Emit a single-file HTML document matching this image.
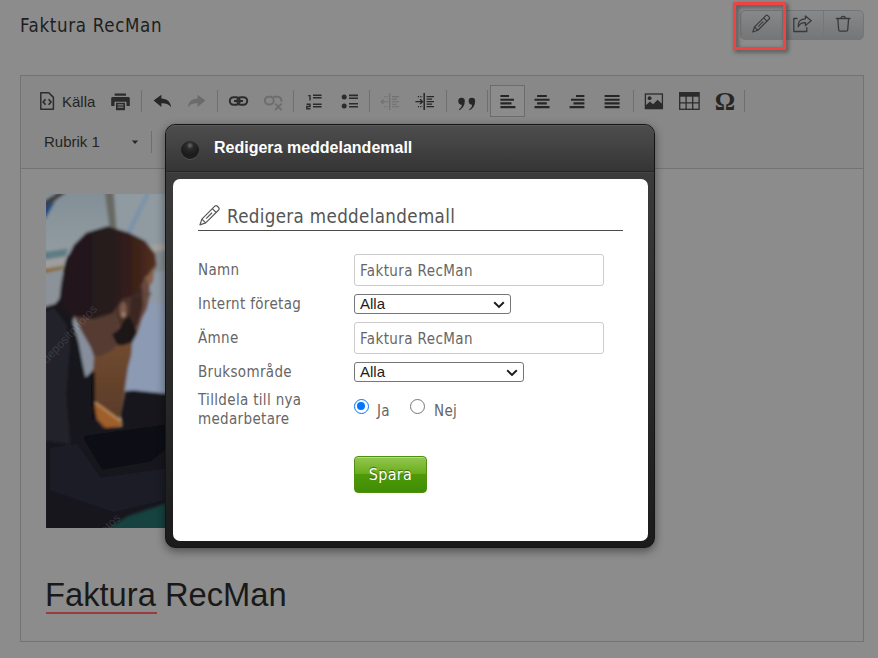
<!DOCTYPE html>
<html lang="sv">
<head>
<meta charset="utf-8">
<title>Redigera meddelandemall</title>
<style>
*{box-sizing:border-box;margin:0;padding:0}
html,body{width:878px;height:658px;overflow:hidden;background:#8c8c8c}
body{position:relative;font-family:"Liberation Sans",sans-serif}
.os{font-family:"DejaVu Sans","Liberation Sans",sans-serif;font-stretch:condensed}
.ar{font-family:"Liberation Sans",sans-serif}
.abs,svg{position:absolute}
#title{position:absolute;left:20px;top:13px;font-size:18.6px;letter-spacing:.66px;color:#1e1e1e;line-height:26px;white-space:nowrap}
#editor{position:absolute;left:20px;top:75px;width:844px;height:567px;border:1px solid #737373;background:#8c8c8c}
#toolbar{position:absolute;left:0;top:0;width:842px;height:93px;background:#888;border-bottom:1px solid #737373}
.sep{position:absolute;width:1px;height:22px;top:90px;background:#6f6f6f}
.tbt{position:absolute;font-size:15px;line-height:20px;color:#242424;white-space:nowrap}
#abtn{position:absolute;left:490px;top:85px;width:35px;height:32px;border:1px solid #6c6c6c;background:#8c8c8c}
#bigh{position:absolute;left:45px;top:575px;font-size:32.7px;line-height:40px;color:#191919;white-space:nowrap}
#redu{position:absolute;left:46px;top:612px;width:111px;height:2px;background:#9a3c3c}
#btns{position:absolute;left:740px;top:10px;width:124px;height:30px;border:1px solid #747576;border-radius:5px;background:linear-gradient(#87888a,#757678)}
#btns i{position:absolute;top:0;width:1px;height:28px;background:#767676}
#redbox{position:absolute;left:733px;top:2px;width:53px;height:48px;border:3px solid #f04343;filter:drop-shadow(2px 2px 2px rgba(0,0,0,.5))}
#modal{position:absolute;left:165px;top:124px;width:490px;height:424px;border-radius:10px;background:linear-gradient(#3b3b3b 50px,#1b1b1b 100%);border:1px solid #151515;box-shadow:0 3px 10px rgba(0,0,0,.45)}
#mhead{position:absolute;left:0;top:0;width:488px;height:47px;border-radius:9px 9px 0 0;background:linear-gradient(#4d4d4d,#353535);border-top:1px solid #5a5a5a;border-bottom:1px solid #262626}
#mline{position:absolute;left:0;top:47px;width:488px;height:1px;background:#454545}
#ball{position:absolute;left:15px;top:15px;width:18px;height:18px;border-radius:50%;background:radial-gradient(circle at 50% 25%,#6a6a6a 0,#2a2a2a 22%,#1b1b1b 60%,#222 100%);box-shadow:0 1px 0 rgba(255,255,255,.12)}
#mtitle{position:absolute;left:48px;top:12px;font-size:16px;font-weight:bold;color:#fff;line-height:20px;white-space:nowrap}
#mbody{position:absolute;left:7px;top:54px;width:475px;height:362px;background:#fff;border-radius:7px}
#h2{position:absolute;left:25px;top:21px;width:425px;height:31px;border-bottom:1px solid #4a4a4a}
#h2 span{position:absolute;left:29px;top:2px;font-size:18.6px;letter-spacing:.35px;line-height:30px;color:#555;white-space:nowrap}
.lbl{position:absolute;left:25px;margin-top:2px;font-size:15px;letter-spacing:.33px;line-height:19px;color:#666;white-space:nowrap}
.inp{position:absolute;left:181px;width:250px;height:32px;border:1px solid #ccc;border-radius:3px;background:#fff}
.inp span{position:absolute;left:5px;top:6px;font-size:15px;letter-spacing:.4px;line-height:20px;color:#666;white-space:nowrap}
.sel{position:absolute;left:181px;height:20px;border:1px solid #767676;border-radius:3px;background:#fff}
.sel span{position:absolute;left:5px;top:0;font-size:15px;line-height:18px;color:#1c1c1c;white-space:nowrap}
.sel svg{right:5px;top:6px}
.radio{position:absolute;top:220px;width:15px;height:15px;border-radius:50%;border:1.500px solid #767676;background:#fff}
.radio.on{border-color:#0075ff}
.radio.on:after{content:"";position:absolute;left:1.750px;top:1.750px;width:8.500px;height:8.500px;border-radius:50%;background:#0075ff}
.rl{position:absolute;top:222px;font-size:15px;letter-spacing:.33px;line-height:20px;color:#666}
#spara{position:absolute;left:181px;top:277px;width:73px;height:37px;border-radius:4px;border:1px solid #4f8f10;background:linear-gradient(#93c750 0,#6aad1c 48%,#4f9a0a 50%,#3f8d05 100%);box-shadow:inset 0 1px 0 rgba(255,255,255,.35)}
#spara span{position:absolute;left:0;width:100%;top:8px;text-align:center;font-size:16px;letter-spacing:.3px;line-height:20px;color:#fff;text-shadow:0 -1px 1px rgba(0,0,0,.45)}
</style>
</head>
<body>
<div id="title" class="os">Faktura RecMan</div>
<div id="btns"><i style="left:41px"></i><i style="left:82px"></i></div>
<div id="redbox"></div>
<div id="editor"><div id="toolbar"></div></div>
<!--TB0-->
<div id="tb">
<svg style="left:39px;top:91px" width="17" height="20" viewBox="0 0 17 20"><path d="M1.8 1.8h8l4.6 4.6v11.8h-12.6z" fill="none" stroke="#2d2d2d" stroke-width="1.5" stroke-linejoin="round"/><path d="M6.6 8.2 4.2 11l2.4 2.8M9.6 8.2 12 11l-2.4 2.8" fill="none" stroke="#2d2d2d" stroke-width="1.7"/></svg>
<div class="tbt ar" style="left:62px;top:92px">Källa</div>
<svg style="left:111px;top:93px" width="19" height="18" viewBox="0 0 19 18"><rect x="3.6" y="0.5" width="11.4" height="2.2" fill="#2b2b2b"/><path d="M1.6 4h15.8a1.4 1.4 0 0 1 1.4 1.4v7.6h-3.3v-4.2h-12v4.2h-3.3v-7.6a1.4 1.4 0 0 1 1.4-1.4z" fill="#2b2b2b"/><rect x="5" y="9.8" width="9" height="7.4" fill="#2b2b2b"/><rect x="6.6" y="11.3" width="5.8" height="1.1" fill="#888"/><rect x="6.6" y="13.6" width="5.8" height="1.1" fill="#888"/></svg>
<i class="sep" style="left:141px"></i>
<svg style="left:153px;top:94px" width="19" height="14" viewBox="0 0 19 14"><path d="M.6 6.6 8.4.8v3.6c5.4.2 9 3 9.8 8.8-2.2-3-5.200-4.200-9.800-4v3.800z" fill="#262626"/></svg>
<svg style="left:187px;top:94px" width="19" height="14" viewBox="0 0 19 14"><path d="M18.400 6.600 10.600.8v3.600c-5.400.2-9 3-9.800 8.800 2.200-3 5.200-4.200 9.800-4v3.800z" fill="#6b6b6b"/></svg>
<i class="sep" style="left:217px"></i>
<svg style="left:228px;top:95px" width="21" height="12" viewBox="0 0 21 12"><rect x="1.800" y="2.200" width="10" height="7.600" rx="3.800" fill="none" stroke="#2b2b2b" stroke-width="2"/><rect x="9.200" y="2.200" width="10" height="7.600" rx="3.800" fill="none" stroke="#2b2b2b" stroke-width="2"/><rect x="6" y="5" width="9" height="2" fill="#2b2b2b"/></svg>
<svg style="left:263px;top:95px" width="21" height="16" viewBox="0 0 21 16"><rect x="1.800" y="1.800" width="9" height="7.600" rx="3.800" fill="none" stroke="#6d6d6d" stroke-width="2"/><path d="M10 1.800h4.600a3.800 3.800 0 0 1 3.600 5" fill="none" stroke="#6d6d6d" stroke-width="2"/><path d="M12.200 8.600 18.600 15M18.600 8.600 12.200 15" stroke="#6d6d6d" stroke-width="1.900"/></svg>
<i class="sep" style="left:293px"></i>
<svg style="left:305px;top:93px" width="18" height="18" viewBox="0 0 18 18"><path d="M8 2.200h8.600M8 4.800h8.600M8 11.200h8.600M8 13.700h8.600" stroke="#2b2b2b" stroke-width="1.500"/><path d="M3.200 2.600h1.800v5M1.600 11.200h3.400v2.300h-3.200v2.300h3.600" fill="none" stroke="#2b2b2b" stroke-width="1.400"/></svg>
<svg style="left:341px;top:93px" width="18" height="18" viewBox="0 0 18 18"><circle cx="3.200" cy="4.100" r="2.500" fill="#2b2b2b"/><circle cx="3.200" cy="12.900" r="2.500" fill="#2b2b2b"/><path d="M8 2.400h9M8 5.300h9M8 10.800h9M8 13.800h9" stroke="#2b2b2b" stroke-width="1.600"/></svg>
<i class="sep" style="left:369px"></i>
<svg style="left:380px;top:92px" width="20" height="19" viewBox="0 0 20 19"><path d="M9.700 1v17" stroke="#707070" stroke-width="1.200"/><path d="M12 4.600h7M12 7.100h5M12 9.700h7M12 12.200h5M12 14.700h7" stroke="#707070" stroke-width="1.100"/><path d="M1.200 9.700h7M3.600 7.500 1.200 9.700 3.600 11.900" fill="none" stroke="#707070" stroke-width="1.100"/><path d="M4 4.600h4.500M4 14.700h4.500" stroke="#707070" stroke-width="1.100" stroke-dasharray="1.100 1.100"/></svg>
<svg style="left:414px;top:92px" width="21" height="19" viewBox="0 0 21 19"><path d="M10.200 1v17" stroke="#262626" stroke-width="1.500"/><path d="M12.600 4.600h7.400M12.600 7.100h5.400M12.600 9.700h7.400M12.600 12.200h5.400M12.600 14.700h7.400" stroke="#262626" stroke-width="1.300"/><path d="M1.400 9.700h7M6 7.300 8.600 9.700 6 12.100" fill="none" stroke="#262626" stroke-width="1.300"/><path d="M3.800 4.600h5M3.800 14.700h5" stroke="#262626" stroke-width="1.300" stroke-dasharray="1.200 1.200"/></svg>
<i class="sep" style="left:446px"></i>
<svg style="left:458px;top:96.500px" width="19.400" height="14" viewBox="0 0 18 13"><path id="qm" d="M3.300.6a3 3 0 0 1 3 3.100c0 3.800-1.700 6.900-5 8.500l-.5-.9c1.900-1.300 2.700-2.600 2.700-4.200a3 3 0 0 1-3.200-3.300 3 3 0 0 1 3-3.200z" fill="#262626"/><path d="M3.300.6a3 3 0 0 1 3 3.100c0 3.800-1.700 6.900-5 8.500l-.5-.9c1.900-1.300 2.700-2.600 2.700-4.200a3 3 0 0 1-3.200-3.300 3 3 0 0 1 3-3.200z" fill="#262626" transform="translate(9.600 0)"/></svg>
<i class="sep" style="left:487px"></i>
<div id="abtn"></div>
<svg style="left:500px;top:94px" width="16" height="16" viewBox="0 0 16 16"><path d="M.4 2h8.600M.4 5.700h13.600M.4 9.400h11.100M.4 13.100h15" stroke="#262626" stroke-width="2.100"/></svg>
<svg style="left:534px;top:94px" width="16" height="16" viewBox="0 0 16 16"><path d="M3.100 2h9.700M.5 5.700h15M3.100 9.400h9.700M.5 13.100h15" stroke="#262626" stroke-width="2.100"/></svg>
<svg style="left:569px;top:94px" width="16" height="16" viewBox="0 0 16 16"><path d="M7 2h8.400M2 5.700h13.400M4.500 9.400h10.900M.6 13.100h14.800" stroke="#262626" stroke-width="2.100"/></svg>
<svg style="left:604px;top:94px" width="16" height="16" viewBox="0 0 16 16"><path d="M.6 2h15M.6 5.700h15M.6 9.400h15M.6 13.100h15" stroke="#262626" stroke-width="2.100"/></svg>
<i class="sep" style="left:633px"></i>
<svg style="left:644px;top:93px" width="20" height="17" viewBox="0 0 20 17"><rect x="1.400" y="1" width="17" height="14.600" fill="none" stroke="#2b2b2b" stroke-width="1.300"/><circle cx="5.600" cy="5.200" r="1.900" fill="#2b2b2b"/><path d="M1.800 15v-2.800l4.200-3.800 3 2.800 4.600-4.400 4.600 4.200v4z" fill="#2b2b2b"/></svg>
<svg style="left:679px;top:92px" width="21" height="18" viewBox="0 0 21 18"><rect x=".7" y=".7" width="19.400" height="16.600" fill="none" stroke="#2b2b2b" stroke-width="1.300"/><rect x=".7" y=".7" width="19.400" height="4" fill="#2b2b2b"/><path d="M.7 10.800h19.400M7.100 4v13.300M13.700 4v13.300" stroke="#2b2b2b" stroke-width="1.300"/></svg>
<div class="abs" style="left:713px;top:86px;width:24px;font:bold 25.5px/32px 'Liberation Serif',serif;color:#262626;text-align:center">Ω</div>
<i class="sep" style="left:744px"></i>
<div class="tbt ar" style="left:44px;top:132px">Rubrik 1</div>
<svg style="left:131px;top:140px" width="8" height="5" viewBox="0 0 8 5"><path d="M.8.600h6.400L4 4z" fill="#262626"/></svg>
<i class="sep" style="left:151px;top:131px"></i>
</div>
<!--TB1-->
<!--TI0-->
<svg style="left:750px;top:13px" width="22" height="22" viewBox="0 0 22 22"><g transform="translate(2.800 19) rotate(-45) scale(.87)" fill="none" stroke="#3a3a3a" stroke-width="1.350" stroke-linejoin="round"><path d="M0 0 5.500-2.700h18.300q1.700 0 1.700 1.500v2.400q0 1.500-1.700 1.500h-18.300z"/><path d="M5.500-2.700v5.400M20.300-2.700v5.400M8.800 0h8.400"/></g></svg>
<svg style="left:791px;top:13px" width="22" height="22" viewBox="0 0 22 22"><g fill="none" stroke="#3a3a3a" stroke-width="1.300" stroke-linejoin="round" stroke-linecap="round"><path d="M6 5.500h-3.200v13h13v-3.800"/><path d="M14.400 3l5.800 4.800-5.800 4.800v-3c-3.600-.2-6 1.200-7.200 4.200-.6-5 2.400-8 7.200-8z"/></g></svg>
<svg style="left:832px;top:13px" width="22" height="22" viewBox="0 0 22 22"><g fill="none" stroke="#3a3a3a" stroke-width="1.300" stroke-linejoin="round" stroke-linecap="round"><path d="M4.400 5.500h13.600M9 5.300q0-2 2.200-2t2.200 2"/><path d="M5.800 5.700 6.700 17q.1 1.200 1.300 1.200h6.400q1.200 0 1.300-1.200l.9-11.300"/></g></svg>
<!--TI1-->
<!--PH0-->
<svg id="photo" style="left:46px;top:194px" width="180" height="334" viewBox="0 0 180 334">
<defs>
<filter id="b1" x="-10%" y="-10%" width="120%" height="120%"><feGaussianBlur stdDeviation="1.400"/></filter>
<filter id="b2" x="-30%" y="-30%" width="160%" height="160%"><feGaussianBlur stdDeviation="4"/></filter>
<clipPath id="pc"><rect x="0" y="0" width="180" height="334"/></clipPath>
<linearGradient id="hairg" x1="0" y1="0" x2="1" y2="0"><stop offset="0" stop-color="#1f181b"/><stop offset=".55" stop-color="#271a1a"/><stop offset=".8" stop-color="#3c2119"/><stop offset="1" stop-color="#54301c"/></linearGradient>
<linearGradient id="wing" x1="0" y1="0" x2="0" y2="1"><stop offset="0" stop-color="#828f97"/><stop offset="1" stop-color="#929ca0"/></linearGradient>
<linearGradient id="woodg" x1="0" y1="0" x2="0" y2="1"><stop offset="0" stop-color="#704b30"/><stop offset="1" stop-color="#573826"/></linearGradient>
</defs>
<g clip-path="url(#pc)">
<rect x="-5" y="-5" width="190" height="344" fill="#89939a"/>
<g filter="url(#b1)">
  <!-- window / background -->
  <rect x="-2" y="-2" width="64" height="62" fill="url(#wing)"/>
  <rect x="66" y="-2" width="60" height="56" fill="#8f9aa1"/>
  <polygon points="101,-2 104,-2 84,40 81,38" fill="#7490ab"/>
  <polygon points="-2,7 13,-2 21,-2 -2,14.500" fill="#3c3d40"/>
  <polygon points="-2,13.500 9.500,7 -2,27" fill="#1c4a80"/>
  <polygon points="58.800,-2 67.700,-2 70.500,35 63.600,35" fill="#696963"/>
  <polygon points="-2,58 22,54.500 19,62.500 -2,66" fill="#5f7c85"/>
  <polygon points="-2,66 19.500,62.500 18,71.500 -2,75" fill="#9d9e9d"/>
  <polygon points="-2,75 17.500,71.500 16.500,75 -2,79.500" fill="#8a6a40"/>
  <rect x="-2" y="79.500" width="20" height="34" fill="#8b9298"/>
  <polygon points="101,51.500 122,48.500 122,56.500 109,58.500" fill="#a2a29e"/>
  <polygon points="108,58 122,56 122,82 106,82" fill="#868c90"/>
  <!-- other person's shirt (right) -->
  <polygon points="104,80 122,76 122,199.700 87.600,196.300 79.300,197 78.700,187.400 82,173.700 85.500,160 86.200,148.400 90.300,141.600 93,134.700 95.800,125.100 101.200,114.200 104,100.500" fill="#8c9bb3"/>
  <polygon points="104,80 122,76 122,112 103,108" fill="#8f99a4"/>
  <!-- wood / chair -->
  <polygon points="45,150 71,151 86.200,148.400 85.500,160 82,173.700 78.700,197 74.600,220.200 72.500,230 56,236 45,214" fill="url(#woodg)"/>
  <polygon points="45.100,205.800 54.700,212 75.200,227 75.900,231.100 68.400,233.900 60.200,233.900 52,225.700 47.900,214.700" fill="#9f5e2a"/>
  <path d="M46 206.500 L55 212.600 L74.500 227" stroke="#c49a68" stroke-width="1.600" fill="none"/>
  <!-- pants -->
  <polygon points="79.300,197 87.600,196.300 122,199.700 122,226 76.600,234 74.600,220.200" fill="#14161d"/>
  <!-- teal bits -->
  <polygon points="122,255 104,272 122,271" fill="#6a9092"/>
  <!-- suit -->
  <polygon points="-2,113 10.300,109.400 15,112.800 26,125.100 32.800,148.400 36.900,170 39.700,183.300 45.500,178 47.900,205 50.600,225.700 57.500,233.900 76.600,232.500 122,224.300 122,340 -2,340" fill="#17181f"/>
  <polygon points="-2,118 8,114 20,130 24,150 20,200 24,250 -2,246" fill="#23222a"/><polygon points="9,110 14,104 28,119 27,128" fill="#1c181c"/>
  <polygon points="31,250 54.700,284 122,274 122,305 68,318 4,296 4,254" fill="#1c1d28"/>
  <polygon points="36,242 122,230 122,254 104,268 56,276" fill="#0f1017"/>
  <polygon points="60.200,336 82,322.600 122,309 122,336" fill="#154241"/>
  <!-- shirt / collar -->
  <polygon points="26,125.100 34.200,134.700 45.100,153.900 47.900,162 47.200,175 39.700,183.300 36.900,170 32.800,148.400" fill="#868e9c"/>
  <!-- tie -->
  <polygon points="45.100,178 48.600,178 49.200,226 45.800,226" fill="#0b0b10"/>
  <!-- neck -->
  <polygon points="27.400,119 47.900,121 65.700,116 72,108 77,126 72,136 65.700,140.200 71.100,151.100 65.700,156.600 54.700,162 47.900,162 45.100,153.900 34.200,134.700" fill="#553a30"/>
  <!-- face -->
  <polygon points="98.500,80 102.600,80 104,100.500 101.200,114.200 95.800,125.100 93,134.700 90.300,141.600 86.200,148.400 76,150 70,126 74,112 82,104" fill="#6b4a3c"/>
  <polygon points="80,104 96,92 97,112 92,130 88,134 82,121" fill="#3a2822"/>
  <polygon points="68,100 86,98 84,126 72,132" fill="#4a3129"/><ellipse cx="77.300" cy="116" rx="3.500" ry="8" fill="#7d5a4b"/>
  <ellipse cx="77.600" cy="120.500" rx="2" ry="2.600" fill="#a08272"/>
  <!-- beard -->
  <polygon points="65.700,140.200 71.100,151.100 76.600,151.600 86.200,148.400 91,138.800 88.900,132 82,121 77,128 72,136" fill="#1f1515"/>
  <!-- hair -->
  <path d="M14.400 107.400 L16.400 90 L20.500 68.400 L28.700 52 L41 39.700 L61.500 33.500 L82 39.700 L98.500 47.900 L108 60.200 L109.400 71 L104 82 L98.500 80 L95.800 88.200 L87.600 100.500 L76.600 103.300 L71.100 110 L65.700 118.300 L47.900 123.800 L27.400 121Z" fill="url(#hairg)" stroke="url(#hairg)" stroke-width="2.500" stroke-linejoin="round"/>
  <polygon points="100,84 108.500,72 107,88 103.500,92" fill="#85604a"/>
  <path d="M88 101.500 L106 100" stroke="#463a38" stroke-width="1.200"/>
</g>
<text x="0" y="0" transform="translate(1 170) rotate(-47)" font-size="12" fill="#fff" fill-opacity=".13" font-family="Liberation Sans,sans-serif">depositphotos</text>
<text x="0" y="0" transform="translate(20 375) rotate(-42)" font-size="12" fill="#fff" fill-opacity=".13" font-family="Liberation Sans,sans-serif">depositphotos</text>
</g>
</svg>
<!--PH1-->
<div id="bigh" class="ar">Faktura RecMan</div>
<div id="redu"></div>
<div id="modal">
  <div id="mhead"><div id="ball"></div><div id="mtitle" class="ar">Redigera meddelandemall</div></div>
  <div id="mline"></div>
  <div id="mbody">
    <svg id="h2p" style="left:22px;top:24px" width="26" height="26" viewBox="0 0 26 26"><g transform="translate(4.900 21.900) rotate(-45)" fill="none" stroke="#585858" stroke-width="1.200" stroke-linejoin="round"><path d="M0 0 5.500-2.700h18.300q1.700 0 1.700 1.500v2.400q0 1.500-1.700 1.500h-18.300z"/><path d="M5.500-2.700v5.400M20.300-2.700v5.400M8.800 0h8.400"/></g></svg>
    <div id="h2"><span class="os">Redigera meddelandemall</span></div>
    <div class="lbl os" style="top:80px">Namn</div>
    <div class="inp" style="top:75px"><span class="os">Faktura RecMan</span></div>
    <div class="lbl os" style="top:114px">Internt företag</div>
    <div class="sel" style="top:115px;width:157px"><span class="ar">Alla</span><svg width="12" height="8" viewBox="0 0 12 8"><path d="M1.2 1.3 L6 6 L10.8 1.3" fill="none" stroke="#1a1a1a" stroke-width="1.9"/></svg></div>
    <div class="lbl os" style="top:148px">Ämne</div>
    <div class="inp" style="top:143px"><span class="os">Faktura RecMan</span></div>
    <div class="lbl os" style="top:182px">Bruksområde</div>
    <div class="sel" style="top:183px;width:170px"><span class="ar">Alla</span><svg width="12" height="8" viewBox="0 0 12 8"><path d="M1.2 1.3 L6 6 L10.8 1.3" fill="none" stroke="#1a1a1a" stroke-width="1.9"/></svg></div>
    <div class="lbl os" style="top:210px">Tilldela till nya<br>medarbetare</div>
    <div class="radio on" style="left:181px"></div><div class="rl os" style="left:204px">Ja</div>
    <div class="radio" style="left:237px"></div><div class="rl os" style="left:261px">Nej</div>
    <div id="spara"><span class="os">Spara</span></div>
  </div>
</div>
</body>
</html>
